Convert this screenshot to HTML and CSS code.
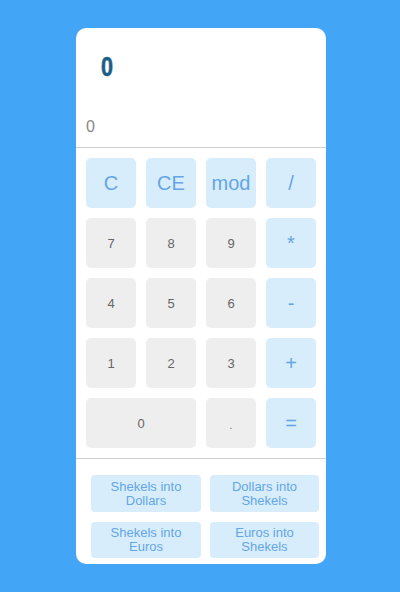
FILE: index.html
```html
<!DOCTYPE html>
<html>
<head>
<meta charset="utf-8">
<link rel="stylesheet" href="styles.css">
</head>
<body>
<div class="calc">
  <div class="display">
    <div class="result"><span class="big">0</span></div>
    <div class="input">0</div>
  </div>
  <div class="keys">
    <div class="key op">C</div>
    <div class="key op">CE</div>
    <div class="key op">mod</div>
    <div class="key op">/</div>
    <div class="key num">7</div>
    <div class="key num">8</div>
    <div class="key num">9</div>
    <div class="key op">*</div>
    <div class="key num">4</div>
    <div class="key num">5</div>
    <div class="key num">6</div>
    <div class="key op">-</div>
    <div class="key num">1</div>
    <div class="key num">2</div>
    <div class="key num">3</div>
    <div class="key op">+</div>
    <div class="key num wide">0</div>
    <div class="key num dot">.</div>
    <div class="key op">=</div>
  </div>
  <div class="convert">
    <div class="conv">Shekels into<br>Dollars</div>
    <div class="conv">Dollars into<br>Shekels</div>
    <div class="conv">Shekels into<br>Euros</div>
    <div class="conv">Euros into<br>Shekels</div>
  </div>
</div>
</body>
</html>
```
FILE: styles.css
```css
html, body {
  margin: 0;
  padding: 0;
}
body {
  background: #42a5f5;
  width: 400px;
  height: 592px;
  font-family: "Liberation Sans", Arial, sans-serif;
  padding-top: 28px;
  box-sizing: border-box;
}
.calc {
  width: 250px;
  margin-left: 76px;
  background: #fff;
  border-radius: 10px;
  height: 536px;
  overflow: hidden;
}
.display {
  height: 119px;
  border-bottom: 1px solid #cfcfcf;
  display: flex;
  flex-direction: column;
  padding-left: 10px;
}
.result {
  height: 81px;
  padding-left: 15px;
  padding-top: 26px;
  box-sizing: border-box;
}
.big {
  display: inline-block;
  font-size: 27px;
  font-weight: bold;
  color: #1b5f86;
  transform: scaleX(0.8);
  transform-origin: left center;
  line-height: 26px;
  -webkit-text-stroke: 0.6px #1b5f86;
}
.input {
  font-size: 16px;
  color: #888;
  line-height: 18px;
  margin-top: 9px;
}
.keys {
  display: grid;
  grid-template-columns: repeat(4, 50px);
  grid-auto-rows: 50px;
  gap: 10px;
  padding: 10px 10px 10px 10px;
  border-bottom: 1px solid #cfcfcf;
}
.key {
  border-radius: 5px;
  display: flex;
  align-items: center;
  justify-content: center;
}
.op {
  background: #d7edfc;
  color: #64a6e4;
  font-size: 20px;
}
.num {
  background: #eeeeee;
  color: #666;
  font-size: 13px;
}
.wide {
  grid-column: span 2;
}
.dot {
  font-size: 10px;
  padding-top: 4px;
  box-sizing: border-box;
}
.convert {
  display: grid;
  grid-template-columns: 110px 109px;
  grid-template-rows: 37px 36px;
  column-gap: 9px;
  row-gap: 10px;
  padding: 16px 7px 6px 15px;
}
.conv {
  background: #d7edfc;
  color: #64a6e4;
  font-size: 13px;
  line-height: 14px;
  border-radius: 4px;
  text-align: center;
  display: flex;
  align-items: center;
  justify-content: center;
}
```
